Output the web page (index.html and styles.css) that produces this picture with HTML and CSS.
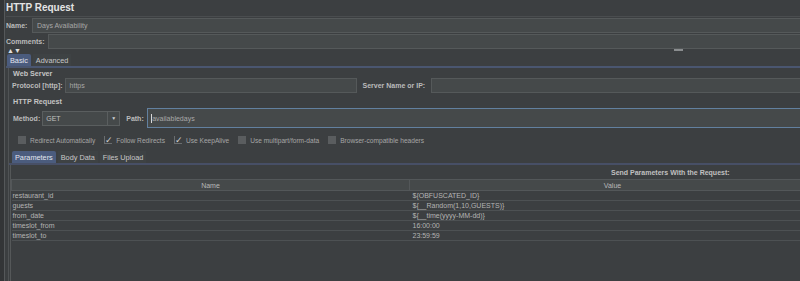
FILE: index.html
```html
<!DOCTYPE html>
<html lang="en">
<head>
    <meta charset="UTF-8">
    <title>HTTP Request</title>
    <link rel="stylesheet" href="styles.css">
</head>
<body>
<div class="app">
    <div class="gutter"></div>
    <div class="main">
        <div class="title">HTTP Request</div>

        <div class="row name-row">
            <span class="label">Name:</span>
            <div class="field">Days Availability</div>
        </div>
        <div class="row comments-row">
            <span class="label">Comments:</span>
            <div class="field"></div>
        </div>
        <div class="arrows">
            <span>&#9650;&#9660;</span>
            <span class="grip"></span>
        </div>

        <div class="tabs">
            <span class="tab active">Basic</span>
            <span class="tab">Advanced</span>
        </div>

        <div class="panel">
            <div class="group-title">Web Server</div>
            <div class="server-row">
                <span class="label">Protocol [http]:</span>
                <div class="field protocol">https</div>
                <span class="label server-label">Server Name or IP:</span>
                <div class="field server"></div>
            </div>

            <div class="group-title http-title">HTTP Request</div>
            <div class="method-row">
                <span class="label">Method:</span>
                <div class="combo">
                    <span class="combo-value">GET</span>
                    <span class="combo-arrow">&#9660;</span>
                </div>
                <span class="label path-label">Path:</span>
                <div class="path"><span class="caret"></span>availabledays</div>
            </div>

            <div class="checks">
                <span class="check"><span class="box"></span>Redirect Automatically</span>
                <span class="check"><span class="box ticked">&#10003;</span>Follow Redirects</span>
                <span class="check"><span class="box ticked">&#10003;</span>Use KeepAlive</span>
                <span class="check"><span class="box"></span>Use multipart/form-data</span>
                <span class="check"><span class="box"></span>Browser-compatible headers</span>
            </div>

            <div class="tabs subtabs">
                <span class="tab active">Parameters</span>
                <span class="tab">Body Data</span>
                <span class="tab">Files Upload</span>
            </div>

            <div class="params">
                <div class="send-title">Send Parameters With the Request:</div>
                <table class="grid">
                    <thead>
                        <tr><th>Name</th><th>Value</th></tr>
                    </thead>
                    <tbody>
                        <tr><td>restaurant_id</td><td>${OBFUSCATED_ID}</td></tr>
                        <tr><td>guests</td><td>${__Random(1,10,GUESTS)}</td></tr>
                        <tr><td>from_date</td><td>${__time(yyyy-MM-dd)}</td></tr>
                        <tr><td>timeslot_from</td><td>16:00:00</td></tr>
                        <tr><td>timeslot_to</td><td>23:59:59</td></tr>
                    </tbody>
                </table>
            </div>
        </div>
    </div>
</div>
</body>
</html>
```
FILE: styles.css
```css
body {
    margin: 0;
    background-color: #3c3f41;
    color: #bbbbbb;
    font-family: "Liberation Sans", Arial, sans-serif;
    font-size: 7px;
    overflow: hidden;
}

.app {
    display: flex;
    height: 281px;
}

.gutter {
    width: 4px;
    background-color: #333537;
    border-right: 1px solid #55585a;
}

.main {
    flex: 1;
    padding-left: 1px;
    min-width: 0;
}

.title {
    height: 16px;
    line-height: 15px;
    font-size: 10px;
    font-weight: bold;
    color: #e4e4e4;
    border-bottom: 1px solid #4a4d4f;
}

.label {
    font-weight: bold;
    white-space: nowrap;
}

.field {
    flex: 1;
    height: 13px;
    line-height: 13px;
    background-color: #45494a;
    border-top: 1px solid #55595a;
    border-bottom: 1px solid #55595a;
    border-left: 1px solid #55595a;
    padding-left: 4px;
    color: #a8a8a8;
    font-size: 7px;
}

.row {
    display: flex;
    align-items: center;
    height: 17px;
}

.name-row .label {
    width: 26px;
}

.comments-row {
    height: 14px;
}

.comments-row .label {
    width: 42px;
}

.arrows {
    position: relative;
    height: 5px;
    font-size: 7px;
    line-height: 5px;
    padding-left: 1px;
    color: #e0e0e0;
}

.grip {
    position: absolute;
    left: 668px;
    top: 1px;
    width: 9px;
    height: 2px;
    background-color: #8a8d8f;
}

.tabs {
    display: flex;
    gap: 2px;
    height: 12px;
    padding-top: 1px;
    padding-left: 1px;
    border-bottom: 2px solid #4a5670;
}

.tab {
    display: flex;
    align-items: center;
    padding: 0 3px;
    font-size: 7.3px;
    color: #c8c8c8;
    background-color: #3e4244;
}

.tab.active {
    background-color: #4b5c7e;
    color: #e2e6ee;
    border-radius: 2px 2px 0 0;
}

.panel {
    margin-left: 2px;
    border-left: 1px solid #505355;
    padding-left: 3px;
}

.group-title {
    height: 11px;
    line-height: 11px;
    font-weight: bold;
    font-size: 7.2px;
    color: #c4c4c4;
    padding-left: 1px;
}

.http-title {
    margin-top: 3px;
    height: 13px;
    line-height: 13px;
}

.server-row {
    display: flex;
    align-items: center;
    height: 13px;
}

.protocol {
    flex: 0 0 286px;
    margin-left: 2px;
    border-right: 1px solid #55595a;
}

.server-label {
    margin-left: 6px;
    width: 68px;
}

.method-row {
    display: flex;
    align-items: center;
    height: 20px;
    padding-left: 1px;
}

.combo {
    display: flex;
    height: 15px;
    width: 78px;
    margin-left: 2px;
    background-color: #45494a;
    border: 1px solid #5a5e5f;
    box-sizing: border-box;
}

.combo-value {
    flex: 1;
    line-height: 13px;
    padding-left: 3px;
    color: #c0c0c0;
}

.combo-arrow {
    width: 11px;
    border-left: 1px solid #5a5e5f;
    font-size: 5px;
    line-height: 13px;
    text-align: center;
    color: #d0d0d0;
}

.path-label {
    margin-left: 6px;
    width: 21px;
}

.path {
    flex: 1;
    display: flex;
    align-items: center;
    height: 20px;
    box-sizing: border-box;
    background-color: #45494a;
    border: 1px solid #62809f;
    border-right: none;
    padding-left: 3px;
    color: #a8a8a8;
}

.caret {
    width: 1px;
    height: 9px;
    background-color: #d8d8d8;
}

.checks {
    display: flex;
    align-items: center;
    height: 20px;
    padding-top: 2px;
    padding-left: 6px;
    font-size: 6.6px;
    color: #a6a6a6;
}

.check {
    display: flex;
    align-items: center;
    margin-right: 9px;
}

.box {
    width: 8px;
    height: 8px;
    margin-right: 4px;
    background-color: #5a5d5f;
    font-size: 9px;
    line-height: 8px;
    color: #d0d0d0;
    text-align: center;
}

.box.ticked {
    background-color: transparent;
    border-left: 1px solid #6a6d6f;
    border-bottom: 1px solid #6a6d6f;
    width: 7px;
    height: 7px;
}

.subtabs {
    margin-left: -3px;
    padding-left: 3px;
    height: 12px;
    border-bottom-color: #474f66;
}

.send-title {
    height: 14px;
    line-height: 16px;
    padding-left: 600px;
    font-weight: bold;
    font-size: 7px;
    color: #c0c0c0;
}

.params {
    border-left: 1px solid #555859;
    margin-left: -2px;
    height: 120px;
}

.grid {
    border-collapse: collapse;
    width: 805px;
    table-layout: fixed;
    font-size: 7px;
}

.grid th {
    height: 10px;
    padding: 0;
    font-weight: normal;
    color: #b8b8b8;
    background-color: #45494a;
    border: 1px solid #535759;
    line-height: 9px;
}

.grid th:first-child {
    width: 397px;
}

.grid td {
    height: 9px;
    line-height: 9px;
    padding: 0 0 0 1px;
    border-bottom: 1px solid #4d5153;
    color: #b4b4b4;
    white-space: nowrap;
}

.grid td:last-child {
    padding-left: 3px;
}
```
